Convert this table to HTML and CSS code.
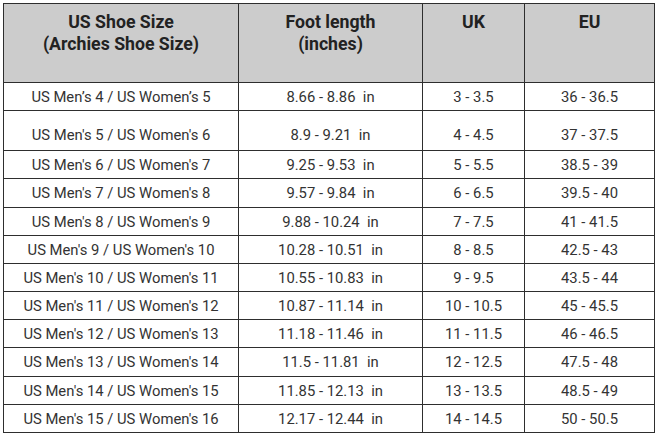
FILE: index.html
```html
<!DOCTYPE html>
<html>
<head>
<meta charset="utf-8">
<link rel="stylesheet" href="styles.css">
</head>
<body>
<table class="size-table">
  <colgroup>
    <col class="c1"><col class="c2"><col class="c3"><col class="c4">
  </colgroup>
  <thead>
    <tr class="head-row">
      <th>US Shoe Size<br>(Archies Shoe Size)</th>
      <th>Foot length<br>(inches)</th>
      <th>UK</th>
      <th>EU</th>
    </tr>
  </thead>
  <tbody>
    <tr class="r28"><td>US Men’s 4 / US Women’s 5</td><td class="len">8.66 - 8.86  in</td><td>3 - 3.5</td><td>36 - 36.5</td></tr>
    <tr class="r40"><td>US Men's 5 / US Women's 6</td><td class="len">8.9 - 9.21  in</td><td>4 - 4.5</td><td>37 - 37.5</td></tr>
    <tr class="r28"><td>US Men's 6 / US Women's 7</td><td class="len">9.25 - 9.53  in</td><td>5 - 5.5</td><td>38.5 - 39</td></tr>
    <tr class="r29"><td>US Men's 7 / US Women's 8</td><td class="len">9.57 - 9.84  in</td><td>6 - 6.5</td><td>39.5 - 40</td></tr>
    <tr class="r28"><td>US Men's 8 / US Women's 9</td><td class="len">9.88 - 10.24  in</td><td>7 - 7.5</td><td>41 - 41.5</td></tr>
    <tr class="r28"><td>US Men's 9 / US Women's 10</td><td class="len">10.28 - 10.51  in</td><td>8 - 8.5</td><td>42.5 - 43</td></tr>
    <tr class="r28"><td>US Men's 10 / US Women's 11</td><td class="len">10.55 - 10.83  in</td><td>9 - 9.5</td><td>43.5 - 44</td></tr>
    <tr class="r28"><td>US Men's 11 / US Women's 12</td><td class="len">10.87 - 11.14  in</td><td>10 - 10.5</td><td>45 - 45.5</td></tr>
    <tr class="r28"><td>US Men's 12 / US Women's 13</td><td class="len">11.18 - 11.46  in</td><td>11 - 11.5</td><td>46 - 46.5</td></tr>
    <tr class="r29"><td>US Men's 13 / US Women's 14</td><td class="len">11.5 - 11.81  in</td><td>12 - 12.5</td><td>47.5 - 48</td></tr>
    <tr class="r28"><td>US Men's 14 / US Women's 15</td><td class="len">11.85 - 12.13  in</td><td>13 - 13.5</td><td>48.5 - 49</td></tr>
    <tr class="r28"><td>US Men's 15 / US Women's 16</td><td class="len">12.17 - 12.44  in</td><td>14 - 14.5</td><td>50 - 50.5</td></tr>
  </tbody>
</table>
</body>
</html>
```
FILE: styles.css
```css
html, body {
  margin: 0;
  padding: 0;
  background: #ffffff;
}
body {
  padding: 3px 0 0 3px;
  font-family: Roboto, "Liberation Sans", sans-serif;
  color: #333333;
}
.size-table {
  border-collapse: collapse;
  table-layout: fixed;
  width: 651px;
}
.c1 { width: 235px; }
.c2 { width: 184px; }
.c3 { width: 102px; }
.c4 { width: 130px; }
.size-table th,
.size-table td {
  border: 1px solid #2e2e2e;
  text-align: center;
  padding: 0;
}
.size-table th {
  background: #cccccc;
  color: #222222;
  font-weight: 700;
  font-size: 17.7px;
  line-height: 22px;
  vertical-align: top;
  padding-top: 7px;
}
.head-row { height: 79px; }
.size-table td {
  font-size: 14.8px;
  line-height: 18px;
  vertical-align: middle;
}
.len { white-space: pre; }
.r28 { height: 28px; }
.r29 { height: 29px; }
.r40 { height: 40px; }
.r40 td {
  vertical-align: bottom;
  padding-bottom: 6px;
}
```
